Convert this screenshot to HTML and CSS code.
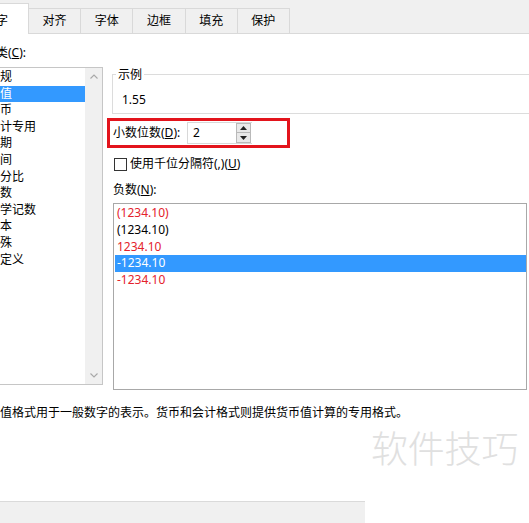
FILE: index.html
```html
<!DOCTYPE html>
<html lang="zh-CN">
<head>
<meta charset="utf-8">
<title>设置单元格格式</title>
<link rel="stylesheet" href="styles.css">
</head>
<body>
<div class="dialog">
  <div class="tabs">
    <div class="tab sel">数字</div>
    <div class="tab">对齐</div>
    <div class="tab">字体</div>
    <div class="tab">边框</div>
    <div class="tab">填充</div>
    <div class="tab">保护</div>
  </div>
  <div class="content">
    <div class="left">
      <div class="lbl">分类(<u>C</u>):</div>
      <div class="catlist">
        <div class="catitems">
          <div class="item">常规</div>
          <div class="item sel">数值</div>
          <div class="item">货币</div>
          <div class="item">会计专用</div>
          <div class="item">日期</div>
          <div class="item">时间</div>
          <div class="item">百分比</div>
          <div class="item">分数</div>
          <div class="item">科学记数</div>
          <div class="item">文本</div>
          <div class="item">特殊</div>
          <div class="item">自定义</div>
        </div>
        <div class="vscroll">
          <div class="sbtn"><svg width="8" height="5" viewBox="0 0 8 5"><path d="M0.5 4.5 L4 1 L7.5 4.5" fill="none" stroke="#a8a8a8" stroke-width="1.1"/></svg></div>
          <div class="sbtn"><svg width="8" height="5" viewBox="0 0 8 5"><path d="M0.5 0.5 L4 4 L7.5 0.5" fill="none" stroke="#a8a8a8" stroke-width="1.1"/></svg></div>
        </div>
      </div>
    </div>
    <div class="right">
      <div class="sample">
        <div class="legend">示例</div>
        <div class="sval">1.55</div>
      </div>
      <div class="decimals">
        <div class="dlabel">小数位数(<u>D</u>):</div>
        <div class="dinput">
          <div class="dval">2</div>
          <div class="spin">
            <div class="sp"><svg width="7" height="4" viewBox="0 0 7 4"><path d="M0 4 L3.5 0 L7 4 Z" fill="#222"/></svg></div>
            <div class="sp"><svg width="7" height="4" viewBox="0 0 7 4"><path d="M0 0 L3.5 4 L7 0 Z" fill="#222"/></svg></div>
          </div>
        </div>
      </div>
      <div class="chk">
        <div class="box"></div>
        <div class="chklbl">使用千位分隔符(,)(<u>U</u>)</div>
      </div>
      <div class="neglbl">负数(<u>N</u>):</div>
      <div class="neglist">
        <div class="nitem red">(1234.10)</div>
        <div class="nitem">(1234.10)</div>
        <div class="nitem red">1234.10</div>
        <div class="nitem sel">-1234.10</div>
        <div class="nitem red">-1234.10</div>
      </div>
    </div>
  </div>
  <p class="desc">数值格式用于一般数字的表示。货币和会计格式则提供货币值计算的专用格式。</p>
  <div class="footer"></div>
</div>
<div class="watermark">软件技巧</div>
</body>
</html>
```
FILE: styles.css
```css
* { box-sizing: border-box; }
html, body { margin: 0; padding: 0; }
body {
  width: 529px;
  height: 523px;
  overflow: hidden;
  position: relative;
  background: #fff;
  font-family: "Noto Sans", "Noto Sans CJK SC", sans-serif;
  font-size: 12px;
  color: #000;
}
u { text-decoration: underline; text-underline-offset: 1px; }

.tabs {
  height: 34px;
  background: #f0f0f0;
  border-bottom: 1px solid #d9d9d9;
  display: flex;
  align-items: flex-end;
}
.tab {
  flex: 0 0 52.2px;
  height: 25px;
  border-top: 1px solid #d9d9d9;
  border-right: 1px solid #d9d9d9;
  line-height: 24px;
  text-align: center;
  white-space: nowrap;
}
.tab.sel {
  flex: 0 0 50px;
  margin-left: -21px;
  height: 31px;
  margin-bottom: -1px;
  background: #fff;
  border-left: 1px solid #d9d9d9;
  padding: 9px 0 0 4px;
  line-height: 16px;
  text-align: left;
}

.content { display: flex; gap: 4px; }

.left { flex: none; width: 119px; margin-left: -16px; padding-top: 11px; }
.lbl { height: 16px; line-height: 16px; white-space: nowrap; }
.catlist {
  margin-top: 6px;
  height: 318px;
  border: 1px solid #c6c6c6;
  display: flex;
}
.catitems { flex: 1; padding-top: 1px; }
.item { height: 16.6px; line-height: 16.6px; padding-left: 3px; white-space: nowrap; }
.item.sel { background: #3399ff; color: #fff; }
.vscroll {
  width: 17px;
  background: #f0f0f0;
  display: flex;
  flex-direction: column;
  justify-content: space-between;
}
.sbtn { height: 17px; display: flex; align-items: center; justify-content: center; }

.right { flex: 1; min-width: 0; }
.sample {
  margin: 40px 0 0 5px;
  border: 1px solid #dcdcdc;
  border-right: none;
  padding: 0 0 5px 3px;
}
.legend {
  width: max-content;
  margin-top: -8px;
  padding: 0 2px;
  background: #fff;
  line-height: 16px;
}
.sval { margin-top: 9px; padding-left: 6px; line-height: 16px; }

.decimals {
  margin-top: 4px;
  width: 183px;
  height: 30px;
  border: 3px solid #e3141c;
  display: flex;
}
.dlabel { width: 77px; padding-left: 3px; line-height: 24px; white-space: nowrap; }
.dinput {
  width: 65px;
  height: 22px;
  margin-top: 1px;
  border: 1px solid #d8d8d8;
  border-right: none;
  display: flex;
}
.dval { flex: 1; padding-left: 5px; line-height: 20px; }
.spin { width: 15px; margin-right: 1px; display: flex; flex-direction: column; }
.sp {
  height: 10px;
  background: #e9e9e9;
  border: 1px solid #b9b9b9;
  display: flex;
  align-items: center;
  justify-content: center;
}
.sp + .sp { border-top: none; }

.chk { margin-top: 8px; height: 16px; display: flex; align-items: center; padding-left: 7px; }
.box { width: 13px; height: 13px; border: 1px solid #333; background: #fff; }
.chklbl { margin-left: 3px; line-height: 16px; white-space: nowrap; }

.neglbl { margin-top: 10px; padding-left: 6px; line-height: 16px; }
.neglist {
  margin: 5px 0 0 6px;
  width: 414px;
  height: 187px;
  border: 1px solid #a8a8a8;
  padding: 1px 0 0 1px;
}
.nitem { height: 16.75px; line-height: 16.75px; padding-left: 2px; white-space: nowrap; }
.nitem.red { color: #e4222c; }
.nitem.sel { background: #3399ff; color: #fff; }

.desc { margin: 15px 0 0 -12px; line-height: 16px; white-space: nowrap; }
.footer {
  margin-top: 80px;
  width: 365px;
  height: 22px;
  background: #f0f0f0;
  border-top: 1px solid #dadada;
}

.watermark {
  position: absolute;
  left: 371px;
  top: 425px;
  font-family: "Noto Sans CJK SC", sans-serif;
  font-weight: 300;
  font-size: 37px;
  line-height: 44px;
  letter-spacing: -0.2px;
  color: #e0e0e0;
  white-space: nowrap;
}
```
